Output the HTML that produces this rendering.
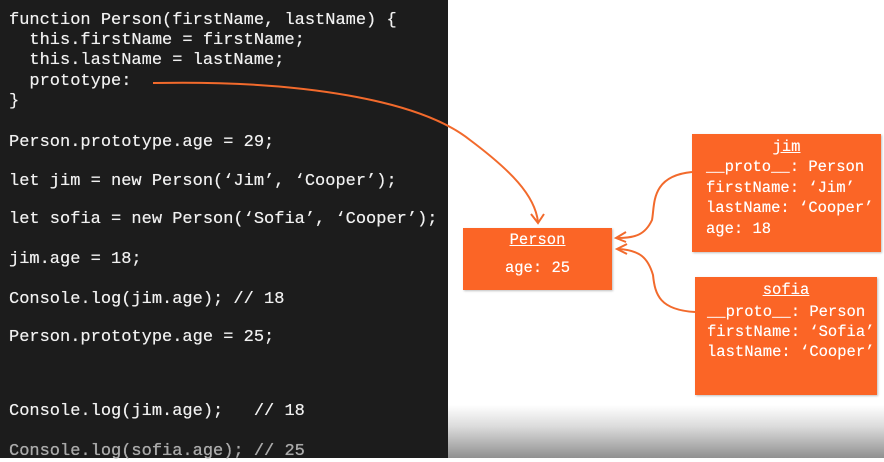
<!DOCTYPE html>
<html><head><style>
body{margin:0;width:884px;height:458px;overflow:hidden;position:relative;background:#fff;font-family:"Liberation Mono",monospace}
#dark{position:absolute;left:0;top:0;width:448px;height:458px;background:#1c1c1c}
.l{position:absolute;left:9px;color:#f0f0f0;font-size:17px;white-space:pre;line-height:20px;font-weight:500;text-shadow:0 0 .4px #fff}
#grad{position:absolute;left:448px;top:405px;width:436px;height:53px;background:linear-gradient(#fff,#dcdcdc 40%,#909090)}
.box{position:absolute;background:#fb6526;color:#fff;font-size:15.5px;line-height:20px;white-space:pre;box-shadow:1px 1px 2px rgba(0,0,0,.25);text-shadow:0 0 .4px #fff}
.box u{display:block;text-align:center}
</style></head><body>
<div id="dark"></div>
<div id="grad"></div>
<div class="l" style="top:11px">function Person(firstName, lastName) {</div>
<div class="l" style="top:31px">  this.firstName = firstName;</div>
<div class="l" style="top:51px">  this.lastName = lastName;</div>
<div class="l" style="top:72px">  prototype:</div>
<div class="l" style="top:92px">}</div>
<div class="l" style="top:133px">Person.prototype.age = 29;</div>
<div class="l" style="top:172px">let jim = new Person(‘Jim’, ‘Cooper’);</div>
<div class="l" style="top:210px">let sofia = new Person(‘Sofia’, ‘Cooper’);</div>
<div class="l" style="top:250px">jim.age = 18;</div>
<div class="l" style="top:290px">Console.log(jim.age); // 18</div>
<div class="l" style="top:328px">Person.prototype.age = 25;</div>
<div class="l" style="top:402px">Console.log(jim.age);   // 18</div>
<div class="l" style="top:442px;color:#a8a8a8">Console.log(sofia.age); // 25</div>

<div class="box" style="left:463px;top:228px;width:149px;height:62px"><u style="margin-top:2px">Person</u><div style="margin-top:8px;text-align:center">age: 25</div></div>
<div class="box" style="left:692px;top:134px;width:189px;height:118px;padding:0"><u style="margin-top:3px">jim</u><div style="padding-left:14px;line-height:20.5px">__proto__: Person
firstName: ‘Jim’
lastName: ‘Cooper’
age: 18</div></div>
<div class="box" style="left:695px;top:277px;width:182px;height:118px"><u style="margin-top:3px">sofia</u><div style="padding-left:12px;margin-top:2px">__proto__: Person
firstName: ‘Sofia’
lastName: ‘Cooper’</div></div>

<svg width="884" height="458" style="position:absolute;left:0;top:0" fill="none" stroke="#f26a2c" stroke-width="2">
<path d="M153 83 C300 80 420 100 470 140 C510 170 535 195 538 222"/>
<path d="M531 214 L538 223 L544 214"/>
<path d="M692 172 C650 176 655 205 652 220 C645 235 635 238 617 238"/>
<path d="M626 232 L616 238 L626 242"/>
<path d="M695 312 C660 310 655 295 653 275 C648 258 640 250 618 249"/>
<path d="M627 244 L617 249 L627 254"/>
</svg>
</body></html>
